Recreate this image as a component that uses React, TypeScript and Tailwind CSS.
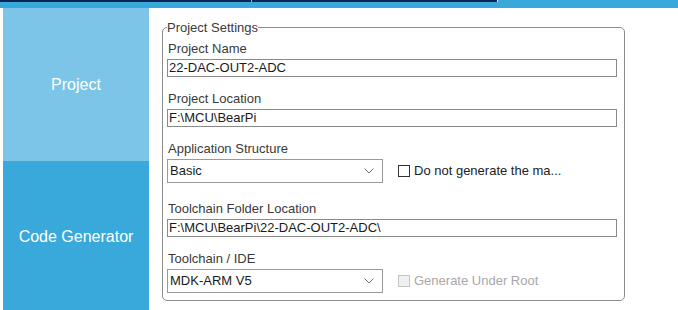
const font = { fontFamily: '"Liberation Sans", Arial, sans-serif' };

function Chevron() {
  return (
    <svg width="10" height="6" viewBox="0 0 10 6" className="text-[#707070]">
      <path d="M0.5 0.5 L5 5 L9.5 0.5" fill="none" stroke="currentColor" strokeWidth="1" />
    </svg>
  );
}

function TextField({ label, value }: { label: string; value: string }) {
  return (
    <div>
      <div className="pl-px text-[13px] leading-[15px] text-[#3a3a3a]">{label}</div>
      <div className="mt-[3px] flex h-[18px] w-[450px] items-center border border-[#8a8a8a] px-px text-[13px] text-[#1a1a1a]">
        {value}
      </div>
    </div>
  );
}

function SelectField({
  label,
  value,
  check,
  disabled,
}: {
  label: string;
  value: string;
  check: string;
  disabled?: boolean;
}) {
  return (
    <div>
      <div className="pl-px text-[13px] leading-[15px] text-[#3a3a3a]">{label}</div>
      <div className="mt-[3px] flex items-center">
        <div className="flex h-[24px] w-[216px] items-center justify-between border border-[#9a9a9a] pl-[2px] pr-[8px] text-[13px] text-[#1a1a1a]">
          <span>{value}</span>
          <Chevron />
        </div>
        <label className="ml-[15px] flex items-center gap-[4px] text-[13px]">
          <span
            className={
              disabled
                ? "h-[12px] w-[12px] border border-[#c4c4c4] bg-[#f0f0f0]"
                : "h-[12px] w-[12px] border border-[#333333] bg-white"
            }
          />
          <span className={disabled ? "text-[#a8a8a8]" : "text-[#222222]"}>{check}</span>
        </label>
      </div>
    </div>
  );
}

export default function App() {
  return (
    <div className="h-[310px] w-[678px] overflow-hidden bg-white" style={font}>
      <div className="flex h-[8px] bg-[#39a9db]">
        <div className="flex h-[2px]">
          <div className="w-[251px] bg-[#0b2656]" />
          <div className="w-px bg-[#9fb4d0]" />
          <div className="w-[245px] bg-[#0b2656]" />
          <div className="w-px bg-[#dfe8f2]" />
        </div>
      </div>

      <div className="flex h-[302px]">
        <div className="ml-[3px] flex w-[146px] flex-col">
          <div className="flex h-[153px] items-center justify-center bg-[#7cc5e8] text-[16px] text-white">
            Project
          </div>
          <div className="flex flex-1 items-center justify-center bg-[#39a9db] pt-[3px] text-[16px] text-white">
            Code Generator
          </div>
        </div>

        <fieldset className="ml-[13px] mt-[12px] h-[281px] w-[463px] rounded-[5px] border border-[#8c8c8c] pl-[4px] pr-[6px]">
          <legend className="text-[13px] leading-[15px] text-[#3a3a3a]">Project Settings</legend>
          <div className="mt-[6px]">
            <TextField label="Project Name" value="22-DAC-OUT2-ADC" />
          </div>
          <div className="mt-[14px]">
            <TextField label="Project Location" value="F:\MCU\BearPi" />
          </div>
          <div className="mt-[14px]">
            <SelectField label="Application Structure" value="Basic" check="Do not generate the ma..." />
          </div>
          <div className="mt-[18px]">
            <TextField label="Toolchain Folder Location" value="F:\MCU\BearPi\22-DAC-OUT2-ADC\" />
          </div>
          <div className="mt-[14px]">
            <SelectField label="Toolchain / IDE" value="MDK-ARM V5" check="Generate Under Root" disabled />
          </div>
        </fieldset>
      </div>
    </div>
  );
}
